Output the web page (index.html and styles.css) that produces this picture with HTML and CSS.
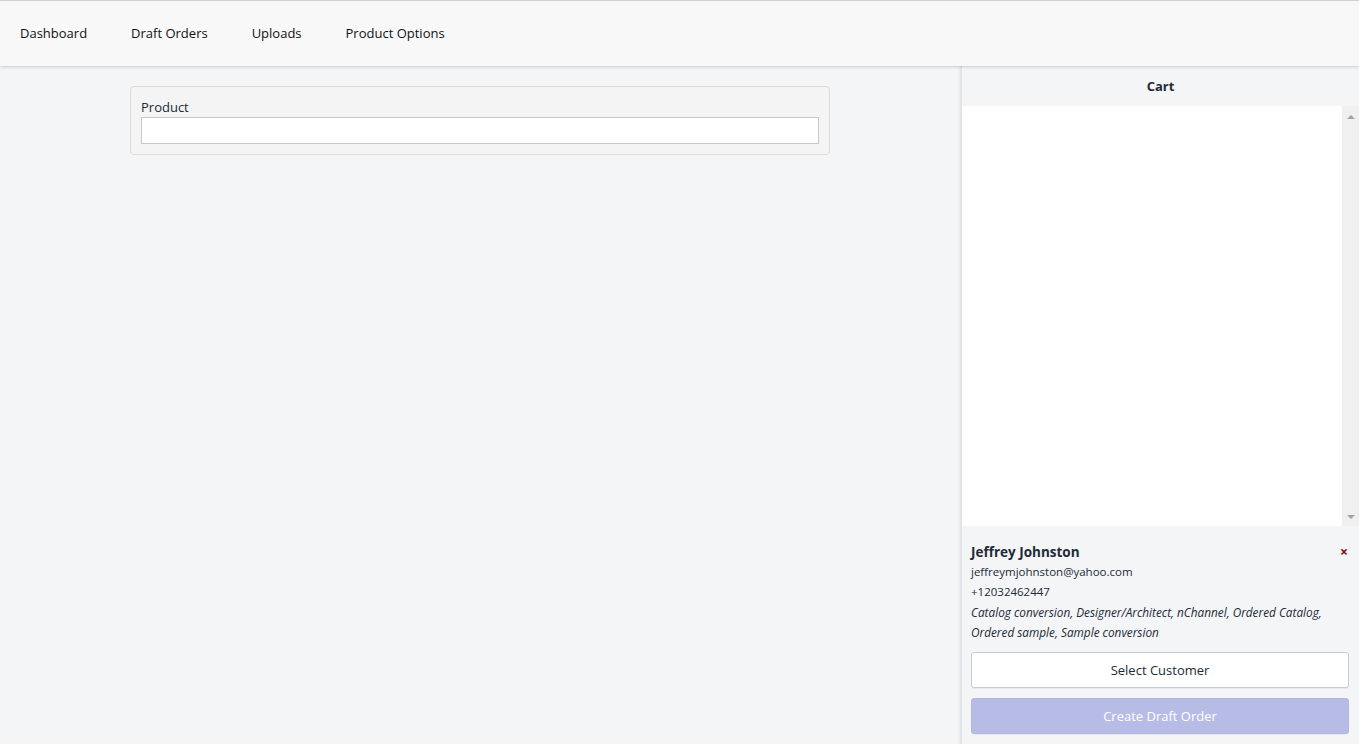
FILE: index.html
```html
<!DOCTYPE html>
<html lang="en">
<head>
  <meta charset="UTF-8">
  <title>Draft Orders</title>
  <link rel="stylesheet" href="styles.css">
</head>
<body>
  <nav class="topnav">
    <a href="#">Dashboard</a>
    <a href="#">Draft Orders</a>
    <a href="#">Uploads</a>
    <a href="#">Product Options</a>
  </nav>

  <div class="layout">
    <main class="main">
      <div class="card">
        <label for="product">Product</label>
        <input type="text" id="product">
      </div>
    </main>

    <aside class="cart">
      <div class="cart-title">Cart</div>
      <div class="cart-list">
        <div class="cart-items"></div>
        <div class="scrollbar">
          <span class="arrow up"></span>
          <span class="arrow down"></span>
        </div>
      </div>
      <div class="customer">
        <div class="customer-head">
          <span class="customer-name">Jeffrey Johnston</span>
          <span class="remove">&times;</span>
        </div>
        <div class="customer-line">jeffreymjohnston@yahoo.com</div>
        <div class="customer-line">+12032462447</div>
        <div class="customer-tags">Catalog conversion, Designer/Architect, nChannel, Ordered Catalog, Ordered sample, Sample conversion</div>
        <button class="btn">Select Customer</button>
        <button class="btn btn-primary" disabled>Create Draft Order</button>
      </div>
    </aside>
  </div>
</body>
</html>
```

FILE: styles.css
```css
* {
  margin: 0;
  padding: 0;
  box-sizing: border-box;
}

body {
  height: 100vh;
  display: flex;
  flex-direction: column;
  font-family: 'Open Sans', sans-serif;
  font-size: 13px;
  color: #212b36;
  background: #f4f5f7;
  overflow: hidden;
}

.topnav {
  height: 66px;
  flex-shrink: 0;
  display: flex;
  align-items: center;
  gap: 44px;
  padding: 0 0 2px 20px;
  background: #f8f8f8;
  border-top: 1px solid #d0d0d0;
  box-shadow: 0 1px 3px rgba(0, 0, 0, 0.18);
  position: relative;
  z-index: 2;
}

.topnav a {
  color: #111;
  text-decoration: none;
  font-size: 13px;
}

.layout {
  flex: 1;
  display: flex;
  min-height: 0;
}

.main {
  flex: 1;
  padding: 20px 130px;
}

.card {
  width: 700px;
  padding: 13px 10px 10px;
  background: #f4f4f5;
  border: 1px solid #dcdcdc;
  border-radius: 4px;
}

.card label {
  display: block;
  font-size: 13px;
  line-height: 17px;
  margin-top: -1px;
  margin-bottom: 1px;
  color: #212b36;
}

.card input {
  display: block;
  width: 100%;
  height: 27px;
  border: 1px solid #c9c9c9;
  background: #fff;
  outline: none;
}

.cart {
  width: 399px;
  display: flex;
  flex-direction: column;
  border-left: 2px solid #e3e4e6;
  box-shadow: -1px 0 2px rgba(0, 0, 0, 0.05);
}

.cart-title {
  height: 40px;
  display: flex;
  align-items: center;
  justify-content: center;
  font-weight: bold;
  font-size: 13px;
}

.cart-list {
  flex: 1;
  display: flex;
  min-height: 0;
}

.cart-items {
  flex: 1;
  background: #fff;
}

.scrollbar {
  width: 17px;
  background: #f0f0f0;
  display: flex;
  flex-direction: column;
  justify-content: space-between;
  align-items: center;
  padding: 9px 0 7px;
}

.arrow {
  width: 0;
  height: 0;
  border-left: 4px solid transparent;
  border-right: 4px solid transparent;
}

.arrow.up {
  border-bottom: 4px solid #a3a3a3;
}

.arrow.down {
  border-top: 4px solid #a3a3a3;
}

.customer {
  padding: 16px 10px 10px 9px;
}

.customer-head {
  display: flex;
  justify-content: space-between;
  align-items: center;
  line-height: 20px;
}

.customer-name {
  font-weight: bold;
  font-size: 13.5px;
}

.remove {
  color: #8b0a1a;
  font-weight: bold;
  font-size: 14px;
  padding-right: 1px;
}

.customer-line {
  font-size: 11.5px;
  line-height: 20px;
}

.customer-tags {
  font-size: 11.8px;
  font-style: italic;
  line-height: 20px;
  margin-bottom: 10px;
}

.btn {
  display: block;
  width: 100%;
  height: 36px;
  font-family: inherit;
  font-size: 13px;
  color: #212b36;
  background: #fff;
  border: 1px solid #c4cdd5;
  border-radius: 3px;
  box-shadow: 0 1px 0 rgba(22, 29, 37, 0.05);
}

.btn + .btn {
  margin-top: 10px;
}

.btn-primary {
  background: #b7bce6;
  border-color: #b3b8e2;
  color: #fff;
}
```
